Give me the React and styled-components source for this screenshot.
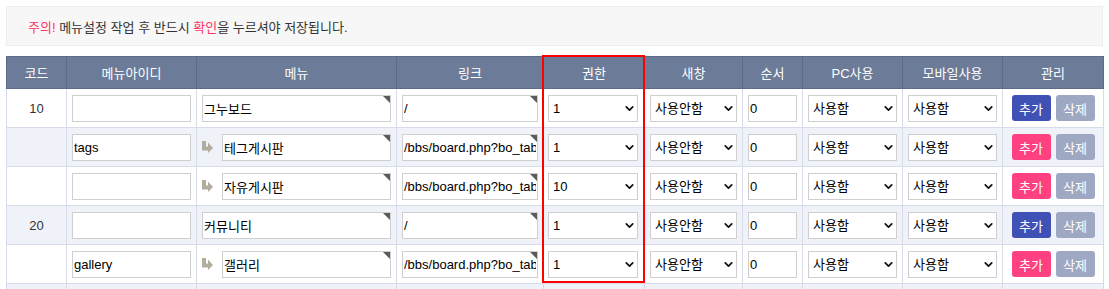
import React from 'react'
import styled, { createGlobalStyle } from 'styled-components'
import { ChevronDown } from 'lucide-react'

const Global = createGlobalStyle`
body {
margin: 0;
background: #fff;
font-family: "Liberation Sans", "Noto Sans CJK KR", sans-serif;
font-size: 13px;
color: #333;
}
`

const Page = styled.div`
padding: 6px;
`

const Notice = styled.div`
height: 38px;
border: 1px solid #eee;
background-color: #f7f7f7;
display: flex;
align-items: center;
padding-left: 21px;
font-size: 13px;
color: #333;
margin-bottom: 10px;
`

const Em = styled.span`
color: #ff3366;
`

const TableWrap = styled.div`
position: relative;
width: 1097px;
`

const Table = styled.table`
width: 1097px;
table-layout: fixed;
border-collapse: collapse;
`

const Col = styled.col`
width: ${p => p.$w}px;
`

const Th = styled.th`
height: 31px;
padding: 0;
background-color: #6c7b97;
border: 1px solid #5d6b88;
color: #fff;
font-weight: normal;
font-size: 13px;
text-align: center;
`

const Tr = styled.tr`
background-color: ${p => (p.$alt ? '#eff2f8' : '#fff')};
`

const Td = styled.td`
height: 38px;
padding: 0 5px;
border: 1px solid #d6dde9;
text-align: ${p => (p.$center ? 'center' : 'left')};
vertical-align: middle;
color: #333;
`

const MenuCell = styled.div`
display: flex;
align-items: center;
gap: 9px;
`

const Field = styled.div`
position: relative;
flex: 1;
height: 27px;
&::after {
  content: '';
  position: absolute;
  top: 1px;
  right: 1px;
  border-style: solid;
  border-width: 0 7px 7px 0;
  border-color: transparent #5b5b5b transparent transparent;
  display: ${p => (p.$corner ? 'block' : 'none')};
}
`

const Input = styled.input`
box-sizing: border-box;
width: 100%;
height: 27px;
border: 1px solid #cfcfcf;
background: #fff;
padding: 0 1px;
font-family: inherit;
font-size: 13px;
color: #000;
outline: none;
`

const SelectBox = styled.div`
position: relative;
height: 27px;
margin-left: ${p => p.$shift || 0}px;
margin-right: ${p => -(p.$shift || 0)}px;
svg {
  position: absolute;
  right: 2px;
  top: 7px;
  pointer-events: none;
}
`

const Select = styled.select`
box-sizing: border-box;
appearance: none;
width: 100%;
height: 27px;
border: 1px solid #cfcfcf;
background: #fff;
padding: 0 4px;
font-family: inherit;
font-size: 13px;
color: #000;
outline: none;
`

const Buttons = styled.div`
display: flex;
justify-content: center;
gap: 5px;
`

const Btn = styled.button`
width: 39px;
height: 26px;
border: none;
border-radius: 3px;
padding: 0;
font-family: inherit;
font-size: 13px;
color: #fff;
background-color: ${p => p.$bg};
`

const Highlight = styled.div`
position: absolute;
left: 536px;
top: -1px;
width: 103px;
height: 228px;
box-sizing: border-box;
border: 2px solid #ff0000;
pointer-events: none;
`

const SubArrow = () => (
  <svg width="11" height="12" viewBox="0 0 11 12">
    <path d="M0 0H4V5.5H6V1.5L11 7L6 12V9.5H0Z" fill="#b2ad9f" />
  </svg>
)

const Drop = ({ value, options, shift }) => (
  <SelectBox $shift={shift}>
    <Select defaultValue={value}>
      {options.map(o => (
        <option key={o}>{o}</option>
      ))}
    </Select>
    <ChevronDown size={13} strokeWidth={3.2} color="#111" />
  </SelectBox>
)

const rows = [
  { code: '10', id: '', name: '그누보드', link: '/', level: '1', sub: false },
  { code: '', id: 'tags', name: '테그게시판', link: '/bbs/board.php?bo_table=tags', level: '1', sub: true },
  { code: '', id: '', name: '자유게시판', link: '/bbs/board.php?bo_table=free', level: '10', sub: true },
  { code: '20', id: '', name: '커뮤니티', link: '/', level: '1', sub: false },
  { code: '', id: 'gallery', name: '갤러리', link: '/bbs/board.php?bo_table=gallery', level: '1', sub: true },
  { code: '30', id: '', name: '고객센터', link: '/', level: '1', sub: false },
]

const widths = [60, 130, 200, 147, 101, 98, 60, 100, 100, 101]
const heads = ['코드', '메뉴아이디', '메뉴', '링크', '권한', '새창', '순서', 'PC사용', '모바일사용', '관리']
const levels = ['1', '2', '3', '4', '5', '6', '7', '8', '9', '10']

export default function App() {
  return (
    <Page>
      <Global />
      <Notice>
        <span>
          <Em>주의!</Em> 메뉴설정 작업 후 반드시 <Em>확인</Em>을 누르셔야 저장됩니다.
        </span>
      </Notice>
      <TableWrap>
        <Table>
          <colgroup>
            {widths.map((w, i) => (
              <Col key={i} $w={w} />
            ))}
          </colgroup>
          <thead>
            <tr>
              {heads.map(h => (
                <Th key={h}>{h}</Th>
              ))}
            </tr>
          </thead>
          <tbody>
            {rows.map((r, i) => (
              <Tr key={i} $alt={i % 2 === 1}>
                <Td $center>{r.code}</Td>
                <Td>
                  <Field>
                    <Input defaultValue={r.id} />
                  </Field>
                </Td>
                <Td>
                  <MenuCell>
                    {r.sub && <SubArrow />}
                    <Field $corner>
                      <Input defaultValue={r.name} />
                    </Field>
                  </MenuCell>
                </Td>
                <Td>
                  <Field $corner>
                    <Input defaultValue={r.link} />
                  </Field>
                </Td>
                <Td>
                  <Drop value={r.level} options={levels} shift={-1} />
                </Td>
                <Td>
                  <Drop value="사용안함" options={['사용안함', '사용함']} />
                </Td>
                <Td>
                  <Field>
                    <Input defaultValue="0" />
                  </Field>
                </Td>
                <Td>
                  <Drop value="사용함" options={['사용함', '사용안함']} />
                </Td>
                <Td>
                  <Drop value="사용함" options={['사용함', '사용안함']} />
                </Td>
                <Td>
                  <Buttons>
                    <Btn $bg={r.sub ? '#ff4081' : '#3f51b5'}>추가</Btn>
                    <Btn $bg="#9ea8c2">삭제</Btn>
                  </Buttons>
                </Td>
              </Tr>
            ))}
          </tbody>
        </Table>
        <Highlight />
      </TableWrap>
    </Page>
  )
}
